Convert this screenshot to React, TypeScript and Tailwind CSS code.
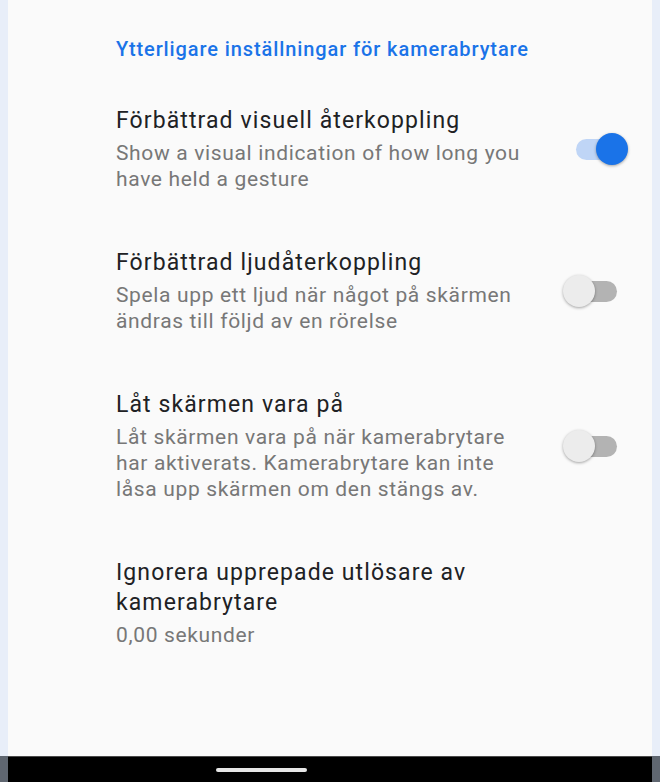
import React from 'react';

type Item = {
  title: string[];
  summary: string[];
  toggle?: boolean;
};

const items: Item[] = [
  {
    title: ['Förbättrad visuell återkoppling'],
    summary: ['Show a visual indication of how long you', 'have held a gesture'],
    toggle: true,
  },
  {
    title: ['Förbättrad ljudåterkoppling'],
    summary: ['Spela upp ett ljud när något på skärmen', 'ändras till följd av en rörelse'],
    toggle: false,
  },
  {
    title: ['Låt skärmen vara på'],
    summary: [
      'Låt skärmen vara på när kamerabrytare',
      'har aktiverats. Kamerabrytare kan inte',
      'låsa upp skärmen om den stängs av.',
    ],
    toggle: false,
  },
  {
    title: ['Ignorera upprepade utlösare av', 'kamerabrytare'],
    summary: ['0,00 sekunder'],
  },
];

const Toggle = ({ on }: { on: boolean }) => (
  <div className="relative w-[65px] h-[32px] shrink-0">
    <div
      className={`absolute left-[13px] top-[6px] w-[41px] h-[21px] rounded-full ${
        on ? 'bg-[#bfd5f6]' : 'bg-[#b3b3b3]'
      }`}
    />
    <div
      className={`absolute top-0 w-[32px] h-[32px] rounded-full shadow-[0_1px_3px_rgba(0,0,0,0.35)] ${
        on ? 'left-[33px] bg-[#1a73e8]' : 'left-0 bg-[#ececec]'
      }`}
    />
  </div>
);

export default function App() {
  return (
    <div
      className="w-[660px] h-[782px] flex flex-col bg-[#e8eef9] overflow-hidden"
      style={{ fontFamily: 'Roboto, "Noto Sans", sans-serif' }}
    >
      <div className="flex-1 mx-[8px] bg-[#fafafa] flex flex-col">
        {/* Category header */}
        <div className="pl-[108px] pt-[37px] mb-[17px] text-[20px] leading-[24px] font-medium tracking-[0.9px] text-[#1a73e8] whitespace-nowrap">
          Ytterligare inställningar för kamerabrytare
        </div>

        {items.map((item, i) => (
          <div key={i} className="flex items-center pl-[108px] pr-[24px] py-[28px]">
            <div className="flex-1 whitespace-nowrap">
              <div className="text-[23px] leading-[30px] tracking-[1.1px] text-[#202124]">
                {item.title.map((t, j) => (
                  <div key={j}>{t}</div>
                ))}
              </div>
              <div className="mt-[4px] text-[21px] leading-[26px] tracking-[0.65px] text-[#777777]">
                {item.summary.map((s, j) => (
                  <div key={j}>{s}</div>
                ))}
              </div>
            </div>
            {item.toggle !== undefined && <Toggle on={item.toggle} />}
          </div>
        ))}
      </div>

      {/* Navigation bar */}
      <div className="h-[26px] flex bg-[#5f6670]">
        <div className="flex-1 mx-[8px] bg-black border-t border-[#4a4a4a] flex items-center">
          <div className="ml-[208px] w-[91px] h-[4px] rounded-full bg-[#e6e6e6]" />
        </div>
      </div>
    </div>
  );
}
